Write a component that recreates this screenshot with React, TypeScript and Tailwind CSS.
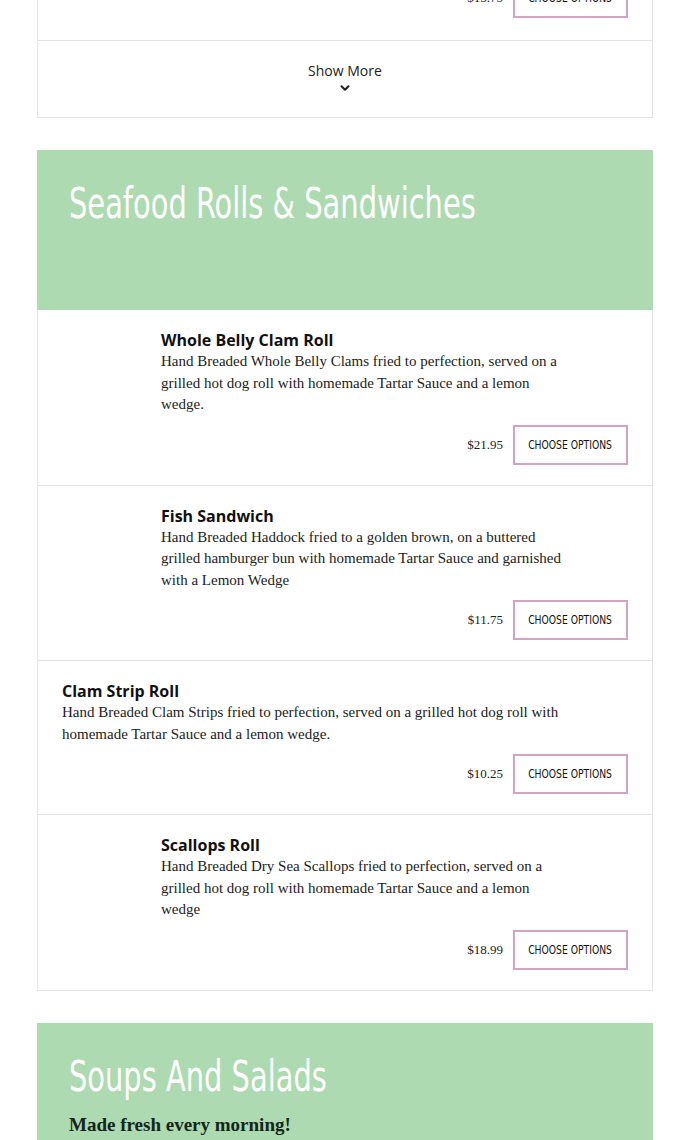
import { ChevronDown } from "lucide-react"

const serif = { fontFamily: '"Liberation Serif", "DejaVu Serif", serif' }
const sans = { fontFamily: '"Open Sans", "Noto Sans", sans-serif' }
const narrow = { fontFamily: '"DejaVu Sans Condensed", "Liberation Sans", sans-serif' }

type Item = { name: string; desc: string; price: string; img: boolean }

const seafood: Item[] = [
  {
    name: "Whole Belly Clam Roll",
    desc: "Hand Breaded Whole Belly Clams fried to perfection, served on a grilled hot dog roll with homemade Tartar Sauce and a lemon wedge.",
    price: "$21.95",
    img: true,
  },
  {
    name: "Fish Sandwich",
    desc: "Hand Breaded Haddock fried to a golden brown, on a buttered grilled hamburger bun with homemade Tartar Sauce and garnished with a Lemon Wedge",
    price: "$11.75",
    img: true,
  },
  {
    name: "Clam Strip Roll",
    desc: "Hand Breaded Clam Strips fried to perfection, served on a grilled hot dog roll with homemade Tartar Sauce and a lemon wedge.",
    price: "$10.25",
    img: false,
  },
  {
    name: "Scallops Roll",
    desc: "Hand Breaded Dry Sea Scallops fried to perfection, served on a grilled hot dog roll with homemade Tartar Sauce and a lemon wedge",
    price: "$18.99",
    img: true,
  },
]

const PriceRow = ({ price }: { price: string }) => (
  <div className="flex items-center justify-end gap-[10px]">
    <span className="text-[13px] text-[#222]" style={serif}>
      {price}
    </span>
    <button className="flex h-[40px] w-[115px] items-center justify-center border-2 border-[#d4a3c4] bg-white">
      <span
        className="inline-block scale-x-[0.79] whitespace-nowrap text-[13px] uppercase text-[#111]"
        style={narrow}
      >
        Choose Options
      </span>
    </button>
  </div>
)

const MenuItem = ({ item }: { item: Item }) => (
  <div className="border-x border-b border-[#e3e3e3] px-[24px] pt-[19px] pb-[20px]">
    <div className="flex gap-[24px]">
      {item.img && <div className="w-[75px] shrink-0" />}
      <div className="flex-1 pr-[62px]">
        <h3 className="text-[16px] font-bold leading-[22px] text-[#111]" style={sans}>
          {item.name}
        </h3>
        <p className="text-[15px] leading-[21.5px] text-[#222]" style={serif}>
          {item.desc}
        </p>
      </div>
    </div>
    <div className="mt-[9px]">
      <PriceRow price={item.price} />
    </div>
  </div>
)

const SectionHeader = ({ title, sub }: { title: string; sub?: string }) => (
  <div className="bg-[#addab0] px-[32px] pt-[26px] pb-[78px]">
    <h2
      className="origin-left scale-x-[0.765] whitespace-nowrap text-[42px] leading-[56px] text-white"
      style={narrow}
    >
      {title}
    </h2>
    {sub && (
      <p className="mt-[6px] text-[19px] font-bold text-[#14261a]" style={serif}>
        {sub}
      </p>
    )}
  </div>
)

export default function App() {
  return (
    <div className="min-h-[1140px] bg-white">
      <div className="mx-[37px] w-[616px]">
        {/* tail of previous section */}
        <div className="h-[41px] overflow-hidden border-x border-b border-[#e3e3e3] px-[24px]">
          <div className="-mt-[22px]">
            <PriceRow price="$15.75" />
          </div>
        </div>
        <div className="flex h-[77px] flex-col items-center justify-center border-x border-b border-[#e3e3e3]">
          <span className="-mt-[1px] text-[14px] leading-[18px] text-[#222]" style={sans}>
            Show More
          </span>
          <ChevronDown size={14} strokeWidth={3.5} className="mt-[1px] text-[#222]" />
        </div>

        <div className="mt-[32px]">
          <SectionHeader title="Seafood Rolls & Sandwiches" />
          {seafood.map((it) => (
            <MenuItem key={it.name} item={it} />
          ))}
        </div>

        <div className="mt-[32px]">
          <SectionHeader title="Soups And Salads" sub="Made fresh every morning!" />
        </div>
      </div>
    </div>
  )
}
